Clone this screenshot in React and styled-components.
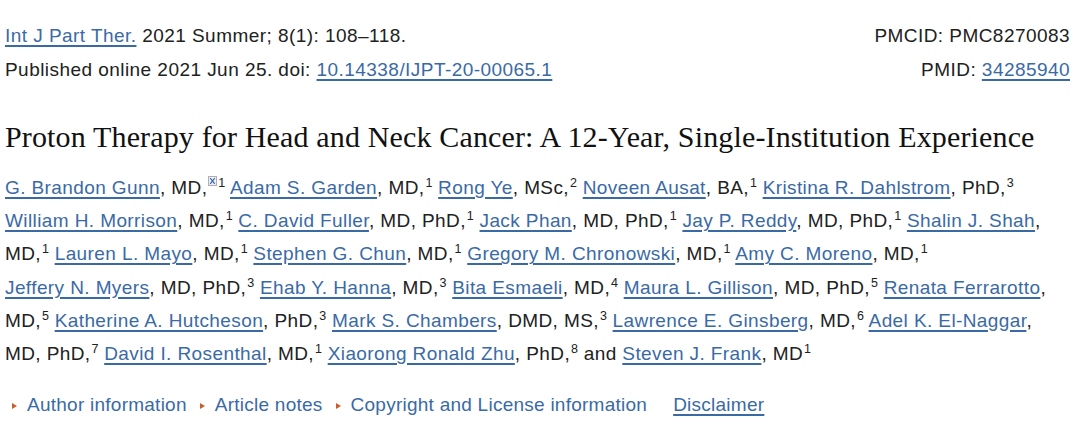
import styled, { createGlobalStyle } from 'styled-components'

const GlobalStyle = createGlobalStyle`
  html, body {
    margin: 0;
    padding: 0;
    background: #fff;
  }
  body {
    font-family: "Liberation Sans", Arial, sans-serif;
    color: #212121;
  }
`

const Page = styled.div`
  width: 1078px;
  height: 440px;
  padding: 19px 8px 0 5px;
  box-sizing: border-box;
  overflow: hidden;
`

const Citation = styled.div`
  display: flex;
  justify-content: space-between;
  font-size: 19px;
  letter-spacing: 0.45px;
  line-height: 34px;
`

const Col = styled.div`
  display: flex;
  flex-direction: column;
  align-items: ${p => (p.right ? 'flex-end' : 'flex-start')};
`

const Link = styled.a`
  color: #3a6aa6;
  text-decoration: underline;
  text-underline-offset: 3px;
  text-decoration-thickness: 1.5px;
`

const Title = styled.h1`
  margin: 32px 0 0;
  font-family: "Liberation Serif", "Times New Roman", serif;
  font-weight: normal;
  font-size: 30px;
  letter-spacing: 0.15px;
  line-height: 36px;
  color: #111;
`

const Authors = styled.p`
  margin: 16px 0 0;
  width: 1068px;
  font-size: 19px;
  letter-spacing: 0.4px;
  line-height: 33.2px;
`

const Sup = styled.sup`
  font-size: 12.5px;
  letter-spacing: 0;
  line-height: 0;
  vertical-align: 7px;
  margin-left: 1px;
`

const Mail = styled.svg`
  width: 9px;
  height: 10px;
  vertical-align: 8px;
  margin-left: 1px;
`

const Notes = styled.div`
  display: flex;
  align-items: baseline;
  margin-top: 23px;
  font-size: 19px;
  letter-spacing: 0.25px;
  line-height: 24px;
`

const Toggle = styled.span`
  color: #3a6aa6;
  margin-right: 6px;
  &::before {
    content: '';
    display: inline-block;
    width: 0;
    height: 0;
    border-left: 5px solid #c8602d;
    border-top: 3.5px solid transparent;
    border-bottom: 3.5px solid transparent;
    margin: 0 10px 2px 7px;
  }
`

const Disclaimer = styled(Link)`
  margin-left: 20px;
`

// [name, degrees, affiliation, line break: 'name' after the name, 'aff' after the superscript]
const authors = [
  ['G. Brandon Gunn', 'MD,', '1', null, true],
  ['Adam S. Garden', 'MD,', '1'],
  ['Rong Ye', 'MSc,', '2'],
  ['Noveen Ausat', 'BA,', '1'],
  ['Kristina R. Dahlstrom', 'PhD,', '3', 'aff'],
  ['William H. Morrison', 'MD,', '1'],
  ['C. David Fuller', 'MD, PhD,', '1'],
  ['Jack Phan', 'MD, PhD,', '1'],
  ['Jay P. Reddy', 'MD, PhD,', '1'],
  ['Shalin J. Shah', 'MD,', '1', 'name'],
  ['Lauren L. Mayo', 'MD,', '1'],
  ['Stephen G. Chun', 'MD,', '1'],
  ['Gregory M. Chronowski', 'MD,', '1'],
  ['Amy C. Moreno', 'MD,', '1', 'aff'],
  ['Jeffery N. Myers', 'MD, PhD,', '3'],
  ['Ehab Y. Hanna', 'MD,', '3'],
  ['Bita Esmaeli', 'MD,', '4'],
  ['Maura L. Gillison', 'MD, PhD,', '5'],
  ['Renata Ferrarotto', 'MD,', '5', 'name'],
  ['Katherine A. Hutcheson', 'PhD,', '3'],
  ['Mark S. Chambers', 'DMD, MS,', '3'],
  ['Lawrence E. Ginsberg', 'MD,', '6'],
  ['Adel K. El-Naggar', 'MD, PhD,', '7', 'name'],
  ['David I. Rosenthal', 'MD,', '1'],
  ['Xiaorong Ronald Zhu', 'PhD,', '8'],
]

export default function App() {
  return (
    <>
      <GlobalStyle />
      <Page>
        <Citation>
          <Col>
            <span>
              <Link href="#">Int J Part Ther.</Link> 2021 Summer; 8(1): 108–118.
            </span>
            <span>
              Published online 2021 Jun 25. doi: <Link href="#">10.14338/IJPT-20-00065.1</Link>
            </span>
          </Col>
          <Col right>
            <span>PMCID: PMC8270083</span>
            <span>
              PMID: <Link href="#">34285940</Link>
            </span>
          </Col>
        </Citation>

        <Title>Proton Therapy for Head and Neck Cancer: A 12-Year, Single-Institution Experience</Title>

        <Authors>
          {authors.map(([name, deg, aff, br, mail]) => (
            <span key={name}>
              <Link href="#">{name}</Link>,{br === 'name' ? <br /> : ' '}{deg}
              {mail && (
                <Mail viewBox="0 0 9 10">
                  <rect x="0.5" y="0.5" width="8" height="9" fill="#eef" stroke="#666" strokeDasharray="1 1" />
                  <path d="M2.2 2.2 L6.8 7.8 M6.8 2.2 L2.2 7.8" stroke="#3a6aa6" strokeWidth="1.2" />
                </Mail>
              )}
              <Sup>{aff}</Sup>
              {br === 'aff' ? <br /> : ' '}
            </span>
          ))}
          and <Link href="#">Steven J. Frank</Link>, MD<Sup>1</Sup>
        </Authors>

        <Notes>
          <Toggle>Author information</Toggle>
          <Toggle>Article notes</Toggle>
          <Toggle>Copyright and License information</Toggle>
          <Disclaimer href="#">Disclaimer</Disclaimer>
        </Notes>
      </Page>
    </>
  )
}
